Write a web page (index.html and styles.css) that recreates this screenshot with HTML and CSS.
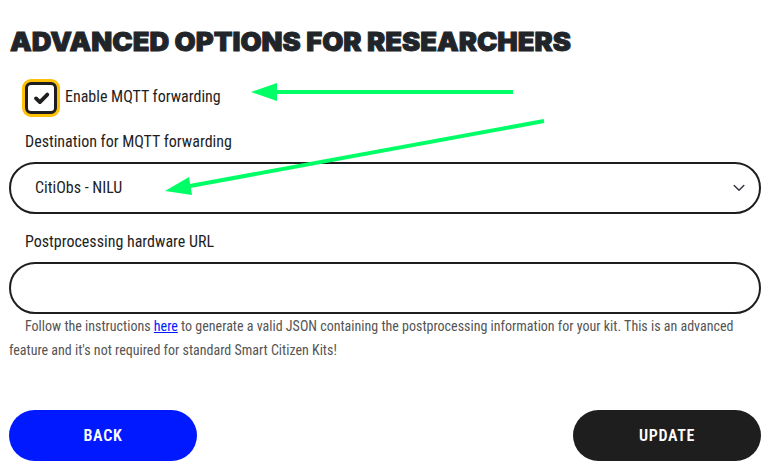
FILE: index.html
```html
<!DOCTYPE html>
<html lang="en">
<head>
<meta charset="utf-8">
<title>Advanced options</title>
<link rel="stylesheet" href="styles.css">
</head>
<body>
<main class="form">
  <h1 class="title"><svg class="title-art" width="564" height="30"><text x="1" y="22.5" textLength="561" lengthAdjust="spacingAndGlyphs">ADVANCED OPTIONS FOR RESEARCHERS</text></svg></h1>
  <div class="check-row">
    <span class="checkbox"><svg width="32" height="32" viewBox="0 0 26 26"><path d="M8 13.4l3.9 3.7 7.4-7.5" fill="none" stroke="#1e1e1e" stroke-width="3.8" stroke-linecap="round" stroke-linejoin="round"/></svg></span>
    <label class="label enable">Enable MQTT forwarding</label>
  </div>
  <label class="label first">Destination for MQTT forwarding</label>
  <div class="field"><span>CitiObs - NILU</span><svg class="chevron" width="12" height="8" viewBox="0 0 12 8"><path d="M1.2 1.5l4.8 4.8 4.8-4.8" fill="none" stroke="#343a40" stroke-width="1.5" stroke-linecap="round" stroke-linejoin="round"/></svg></div>
  <label class="label second">Postprocessing hardware URL</label>
  <div class="field"></div>
  <p class="help">Follow the instructions <a class="link">here</a> to generate a valid JSON containing the postprocessing information for your kit. This is an advanced feature and it's not required for standard Smart Citizen Kits!</p>
  <div class="actions">
    <div class="btn back">BACK</div>
    <div class="btn update">UPDATE</div>
  </div>
</main>
<svg class="arrows" width="772" height="474" viewBox="0 0 772 474">
  <path d="M513 92H275M544 121L190 186" stroke="#00ff66" stroke-width="4"/>
  <path d="M251 92l26-9v18zM165 191l24-14 3 18z" fill="#00ff66"/>
</svg>
</body>
</html>
```

FILE: styles.css
```css
* { box-sizing: border-box; }
body { margin: 0; background: #fff; color: #1e1e1e; font-family: "Roboto Condensed", Roboto, sans-serif; font-stretch: 75%; font-size: 16px; line-height: 24px; }
svg { display: block; overflow: visible; fill: currentColor; }
.form { width: 752px; margin-left: 9px; padding-top: 28px; }
.title { margin: 0; height: 30px; color: #212529; }
.title-art { font-family: Inter, sans-serif; font-stretch: 100%; font-weight: 900; font-size: 25.5px; stroke: #212529; stroke-width: 0.9px; }
.check-row { display: flex; align-items: center; height: 38px; margin: 21px 0 0 13px; gap: 5px; }
.checkbox { width: 38px; height: 38px; border: 3px solid #ffc107; border-radius: 9px; background: #ffc107; }
.checkbox svg { border: 3px solid #1e1e1e; border-radius: 6px; background: #fff; }
.enable { padding-bottom: 2px; }
.label { display: block; }
.label.first, .label.second { padding-left: 16px; height: 24px; }
.first { margin: 13px 0 8px; }
.second { margin: 16px 0 8px; }
.field { display: flex; align-items: center; justify-content: space-between; height: 52px; border: 2px solid #1e1e1e; border-radius: 26px; padding: 0 14px 0 24px; }
.help { margin: 0; height: 48px; font-size: 14px; color: #555; text-indent: 16px; }
.link { color: #0019ff; text-decoration: underline; }
.actions { display: flex; justify-content: space-between; margin-top: 48px; }
.btn { display: flex; align-items: center; justify-content: center; width: 188px; height: 51px; border-radius: 26px; color: #fff; font-weight: 600; letter-spacing: 0.7px; }
.back { background: #0019ff; }
.update { background: #1e1e1e; }
.arrows { position: absolute; left: 0; top: 0; pointer-events: none; }
```
